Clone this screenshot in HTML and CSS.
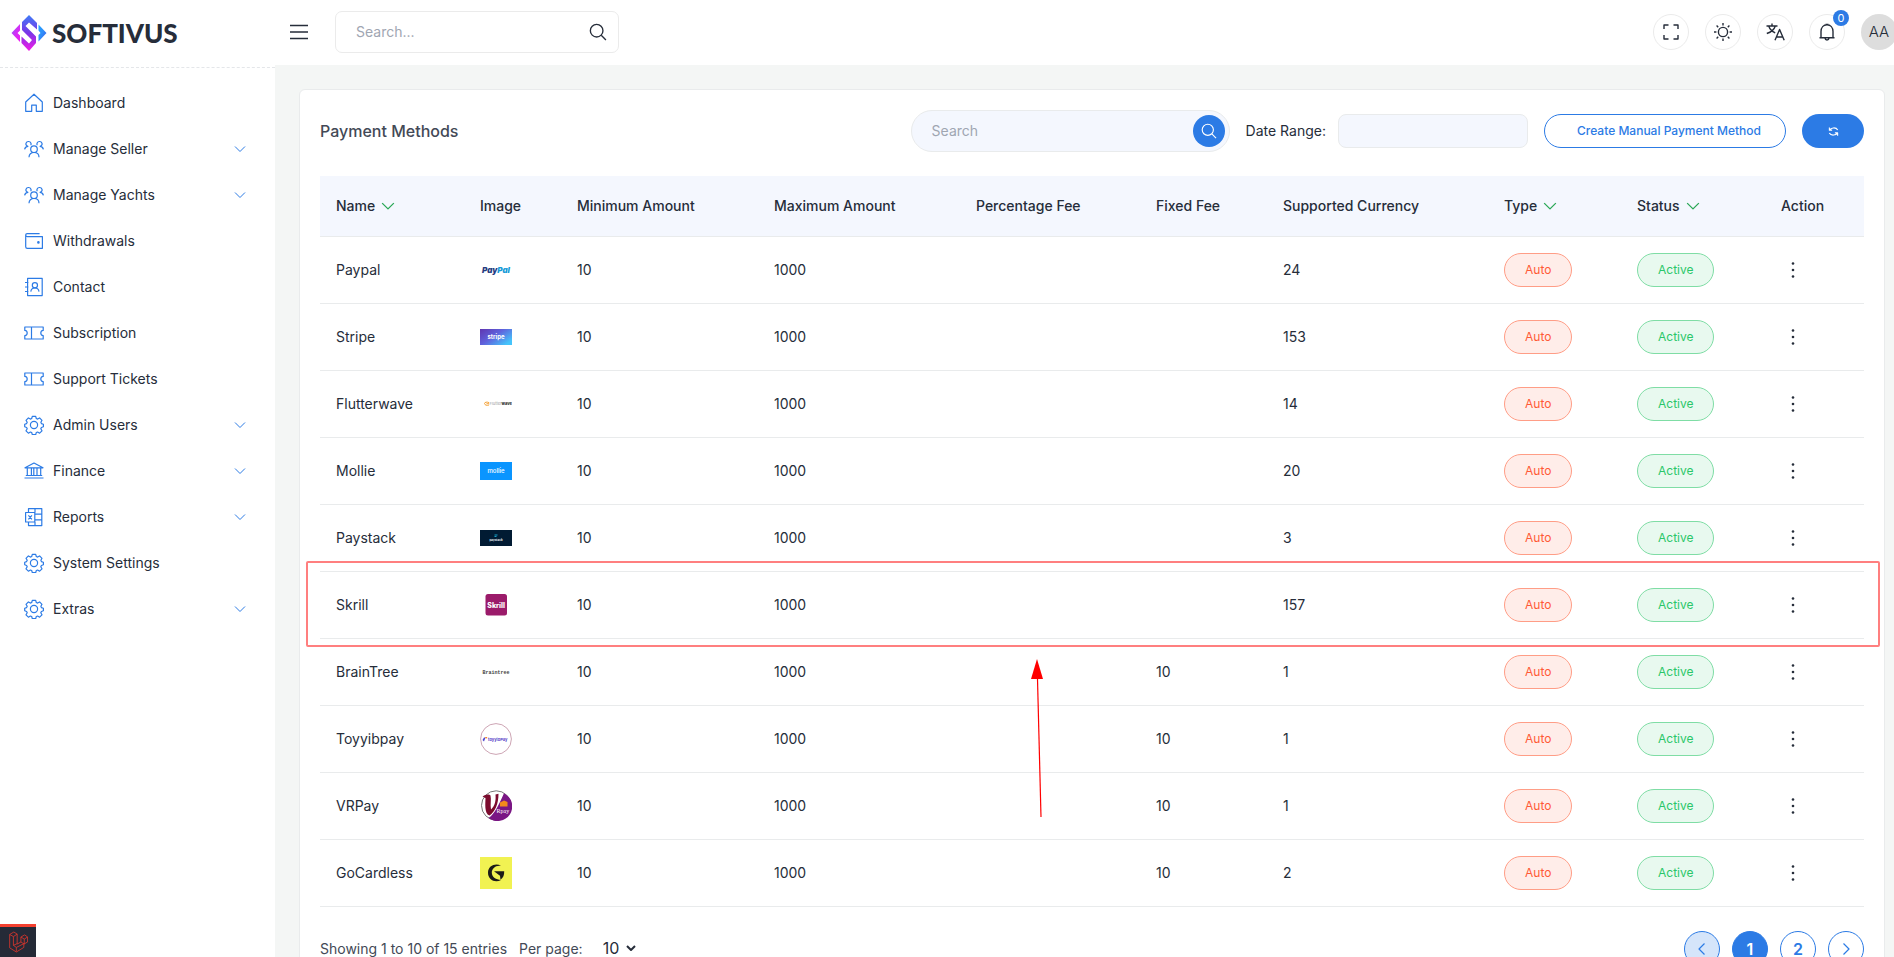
FILE: index.html
```html
<!DOCTYPE html>
<html lang="en">
<head>
<meta charset="utf-8">
<meta name="viewport" content="width=device-width, initial-scale=1">
<title>Payment Methods</title>
<link rel="stylesheet" href="styles.css">
</head>
<body>
<svg class="sprite" aria-hidden="true">
  <symbol id="i-home" viewBox="0 0 20 20"><path d="M10 1.2 1.7 9v9.3h6v-6.2h4.6v6.2h6V9z"/></symbol>
  <symbol id="i-people" viewBox="0 0 20 20"><circle cx="10" cy="10.200" r="3.300"/><path d="M5 18.200c0-2.800 2-4.700 5-4.700s5 1.900 5 4.700M.6 10.400C1 8.400 2.200 7.400 3.900 7.300 2.200 6.800 1.800 5.600 1.900 4.600 2.300 2.200 5.800 1.600 7 4.200v2M19.400 10.400c-.4-2-1.600-3-3.300-3.100 1.700-.5 2.100-1.700 2-2.700C17.700 2.200 14.200 1.600 13 4.200v2"/></symbol>
  <symbol id="i-wallet" viewBox="0 0 20 20"><path d="M15.600 2.600H3.200c-2 0-2 3 0 3h15.200v11.700H3.300c-1 0-1.600-.6-1.600-1.600V4"/><circle class="solid" cx="14.400" cy="11.400" r=".7"/></symbol>
  <symbol id="i-contact" viewBox="0 0 20 20"><path d="M3.600 1.400h14.600v17.200H3.600zM1 5.500h3.400M1 10h3.400M1 14.500h3.400M6.800 14.600c.3-2.400 1.800-3.600 4.100-3.600s3.800 1.200 4.100 3.600"/><circle cx="10.900" cy="8.300" r="2.600"/></symbol>
  <symbol id="i-ticket" viewBox="0 0 20 20"><path d="M.8 4h18.400v3.400c-3.200.3-3.200 4.900 0 5.200V16H.8v-3.400c3.200-.3 3.200-4.900 0-5.200zM7.500 4v12"/></symbol>
  <symbol id="i-gear" viewBox="0 0 20 20"><circle cx="10" cy="10" r="3.600"/><path d="M8.300 1.300h3.400l.6 2.200 1.300.6 2-1.200 2.400 2.400-1.100 2 .5 1.300 2 .6v2.600l-2 .7-.6 1.300 1.200 2-2.400 2.400-2-1.200-1.300.5-.6 2.200H8.300l-.6-2.200-1.300-.5-2 1.200L2 15.800l1.200-2-.6-1.300-1.900-.7V9.200l1.900-.6.600-1.300L2 5.300l2.400-2.400 2 1.200 1.300-.6z"/></symbol>
  <symbol id="i-bank" viewBox="0 0 20 20"><path d="M1 6.800 10 2l9 4.800zM3.300 7v7.500M7.400 7v7.500M9.800 7v7.500M13 7v7.500M16.700 7v7.500M1.800 14.500h16.400M.5 17h19"/></symbol>
  <symbol id="i-report" viewBox="0 0 20 20"><path d="M4.500 5.500V1.600h13.300v17H4.500V15M1.600 5.500h9.200V15H1.600zM4.400 8.300l3.500 4M7.900 8.300l-3.500 4M11 7.200h6.800M11 12.900h6.800M11 1.600v4M11 15v3.500"/></symbol>
  <symbol id="i-down" viewBox="0 0 12 12"><path d="m1 3.500 5 5 5-5"/></symbol>
  <symbol id="i-search" viewBox="0 0 20 20"><circle cx="8.500" cy="8.500" r="7"/><path d="m13.600 13.600 5.200 5.200"/></symbol>
  <symbol id="i-dots" viewBox="0 0 4 18"><circle cx="2" cy="2.500" r="1.300"/><circle cx="2" cy="9" r="1.300"/><circle cx="2" cy="15.500" r="1.300"/></symbol>
</svg>

<div class="app">
  <aside class="sidebar">
    <a class="brand" href="#" aria-label="Softivus">
      <svg class="brand-mark" viewBox="0 0 36 36" aria-hidden="true">
        <defs>
          <linearGradient id="g-blue" x1="0" y1="0" x2="1" y2="1"><stop offset="0" stop-color="#22a5ff"/><stop offset=".5" stop-color="#2f8dfa"/><stop offset="1" stop-color="#3c4fe0"/></linearGradient>
          <linearGradient id="g-pink" x1="0" y1="0" x2="1" y2="1"><stop offset="0" stop-color="#8a5cf8"/><stop offset=".55" stop-color="#d62cf6"/><stop offset="1" stop-color="#f01cf0"/></linearGradient>
          <linearGradient id="g-mid" x1="0" y1="0" x2="0" y2="1"><stop offset="0" stop-color="#3f7cf6"/><stop offset=".5" stop-color="#7a35e8"/><stop offset="1" stop-color="#f31be6"/></linearGradient>
        </defs>
        <path fill="url(#g-mid)" d="m18 0 8 8v6.500l-8-7-3.500 3.500L25 21.500V28l-7 8-7.500-8v-6.500l7.500 7 3-3.500-10-10V7z"/>
        <path fill="url(#g-blue)" d="m27.500 9.500 8 8.500-8 8.500V20l2-2-2-2.500z"/>
        <path fill="url(#g-pink)" d="M9 9v6.500L6.500 18 9 20.500V27L.5 18z"/>
      </svg>
      <span class="brand-name">SOFTIVUS</span>
    </a>
    <nav class="menu" aria-label="Main">
      <a class="menu-item" href="#"><svg class="menu-icon"><use href="#i-home"/></svg><span>Dashboard</span></a>
      <a class="menu-item" href="#"><svg class="menu-icon"><use href="#i-people"/></svg><span>Manage Seller</span><svg class="menu-caret"><use href="#i-down"/></svg></a>
      <a class="menu-item" href="#"><svg class="menu-icon"><use href="#i-people"/></svg><span>Manage Yachts</span><svg class="menu-caret"><use href="#i-down"/></svg></a>
      <a class="menu-item" href="#"><svg class="menu-icon"><use href="#i-wallet"/></svg><span>Withdrawals</span></a>
      <a class="menu-item" href="#"><svg class="menu-icon"><use href="#i-contact"/></svg><span>Contact</span></a>
      <a class="menu-item" href="#"><svg class="menu-icon"><use href="#i-ticket"/></svg><span>Subscription</span></a>
      <a class="menu-item" href="#"><svg class="menu-icon"><use href="#i-ticket"/></svg><span>Support Tickets</span></a>
      <a class="menu-item" href="#"><svg class="menu-icon"><use href="#i-gear"/></svg><span>Admin Users</span><svg class="menu-caret"><use href="#i-down"/></svg></a>
      <a class="menu-item" href="#"><svg class="menu-icon"><use href="#i-bank"/></svg><span>Finance</span><svg class="menu-caret"><use href="#i-down"/></svg></a>
      <a class="menu-item" href="#"><svg class="menu-icon"><use href="#i-report"/></svg><span>Reports</span><svg class="menu-caret"><use href="#i-down"/></svg></a>
      <a class="menu-item" href="#"><svg class="menu-icon"><use href="#i-gear"/></svg><span>System Settings</span></a>
      <a class="menu-item" href="#"><svg class="menu-icon"><use href="#i-gear"/></svg><span>Extras</span><svg class="menu-caret"><use href="#i-down"/></svg></a>
    </nav>
  </aside>

  <div class="page">
    <header class="topbar">
      <button class="burger" type="button" aria-label="Toggle menu"><svg viewBox="0 0 20 16"><path d="M1 1.500h18M1 8h18M1 14.500h18"/></svg></button>
      <form class="top-search">
        <input type="search" placeholder="Search..." aria-label="Search site">
        <button type="button" aria-label="Search"><svg><use href="#i-search"/></svg></button>
      </form>
      <div class="top-actions">
        <button class="round" type="button" aria-label="Full screen"><svg viewBox="0 0 20 20"><path d="M3 7V3h4.500M12.500 3H17v4M17 13v4h-4.500M7.500 17H3v-4"/></svg></button>
        <button class="round" type="button" aria-label="Theme"><svg viewBox="0 0 20 20"><circle cx="10" cy="10" r="4.600"/><path d="M10 1v2.400M10 16.600V19M1 10h2.400M16.600 10H19M3.600 3.600l1.600 1.600M14.800 14.800l1.600 1.600M3.600 16.400l1.600-1.600M14.800 5.200l1.600-1.600"/></svg></button>
        <button class="round" type="button" aria-label="Language"><svg viewBox="0 0 20 20"><path d="M1.500 4h11M7 1.600V4M3.800 4.200c1 3 3.700 5.400 6.400 6.600M10.200 4.200c-1 3.200-4.200 5.900-8.400 7.300M10 18.200l4.600-10.700 4.600 10.700M11.600 15h6"/></svg></button>
        <button class="round" type="button" aria-label="Notifications"><svg viewBox="0 0 20 20"><path d="M2.500 15.800h15M4 15.800V9.500c0-4 2.500-6.700 6-6.700s6 2.700 6 6.700v6.300M8.500 2.500h3M8 16.200c.3 2.400 3.700 2.400 4 0"/></svg><span class="count">0</span></button>
        <button class="avatar" type="button">AA</button>
      </div>
    </header>

    <main class="content">
      <section class="card">
        <div class="toolbar">
          <h1 class="title">Payment Methods</h1>
          <form class="pill-search">
            <input type="search" placeholder="Search" aria-label="Search payment methods">
            <button type="button" aria-label="Search"><svg><use href="#i-search"/></svg></button>
          </form>
          <div class="range"><label for="range">Date Range:</label><input id="range" type="text"></div>
          <div class="tool-buttons">
            <button class="btn btn-line" type="button">Create Manual Payment Method</button>
            <button class="btn btn-fill" type="button" aria-label="Refresh"><svg viewBox="0 0 12 12"><path d="M1.500 1.500v3h3M1.800 4.400C3 1.900 8.600.8 10.600 4.400M10.500 10.500v-3h-3M10.200 7.600C9 10.100 3.400 11.200 1.400 7.600"/></svg></button>
          </div>
        </div>

        <table class="grid">
          <colgroup><col class="c-name"><col class="c-image"><col class="c-min"><col class="c-max"><col class="c-pct"><col class="c-fixed"><col class="c-cur"><col class="c-type"><col class="c-status"><col class="c-action"></colgroup>
          <thead>
            <tr>
              <th><span class="sort">Name<svg><use href="#i-down"/></svg></span></th><th>Image</th><th>Minimum Amount</th><th>Maximum Amount</th><th>Percentage Fee</th><th>Fixed Fee</th><th>Supported Currency</th>
              <th><span class="sort">Type<svg><use href="#i-down"/></svg></span></th><th><span class="sort">Status<svg><use href="#i-down"/></svg></span></th><th>Action</th>
            </tr>
          </thead>
          <tbody>
            <tr><td>Paypal</td><td><svg class="thumb" viewBox="0 0 32 32"><text class="t-paypal" x="2" y="18.500"><tspan fill="#253b80">Pay</tspan><tspan fill="#179bd7">Pal</tspan></text></svg></td><td>10</td><td>1000</td><td></td><td></td><td>24</td><td><span class="tag auto">Auto</span></td><td><span class="tag active">Active</span></td><td><button class="more" type="button" aria-label="Paypal actions"><svg><use href="#i-dots"/></svg></button></td></tr>
            <tr><td>Stripe</td><td><svg class="thumb" viewBox="0 0 32 32"><defs><linearGradient id="g-stripe" x1="0" y1="0" x2="1" y2=".7"><stop offset="0" stop-color="#5f35b0"/><stop offset=".5" stop-color="#5f62dc"/><stop offset="1" stop-color="#45c4fb"/></linearGradient></defs><path fill="url(#g-stripe)" d="M0 8h32v16H0z"/><text class="t-stripe" x="16" y="18" text-anchor="middle">stripe</text></svg></td><td>10</td><td>1000</td><td></td><td></td><td>153</td><td><span class="tag auto">Auto</span></td><td><span class="tag active">Active</span></td><td><button class="more" type="button" aria-label="Stripe actions"><svg><use href="#i-dots"/></svg></button></td></tr>
            <tr><td>Flutterwave</td><td><svg class="thumb" viewBox="0 0 32 32"><path fill="none" stroke="#f5a43c" d="M9 14.600c-2-1-4.500-.4-4.500.9 0 1.400 2.500 2.500 4.500 1.500M6.500 15.700h2.500"/><text class="t-flutter" x="9.500" y="17.300"><tspan fill="#999">Flutter</tspan><tspan class="bold" fill="#333">wave</tspan></text></svg></td><td>10</td><td>1000</td><td></td><td></td><td>14</td><td><span class="tag auto">Auto</span></td><td><span class="tag active">Active</span></td><td><button class="more" type="button" aria-label="Flutterwave actions"><svg><use href="#i-dots"/></svg></button></td></tr>
            <tr><td>Mollie</td><td><svg class="thumb" viewBox="0 0 32 32"><path fill="#0a95ff" d="M0 7h32v18H0z"/><text class="t-mollie" x="16" y="18" text-anchor="middle">mollie</text></svg></td><td>10</td><td>1000</td><td></td><td></td><td>20</td><td><span class="tag auto">Auto</span></td><td><span class="tag active">Active</span></td><td><button class="more" type="button" aria-label="Mollie actions"><svg><use href="#i-dots"/></svg></button></td></tr>
            <tr><td>Paystack</td><td><svg class="thumb" viewBox="0 0 32 32"><path fill="#011b33" d="M0 8h32v16H0z"/><path fill="#1a9fc6" d="M14.500 12.500h3v1h-3zm0 1.500h2v1h-2z"/><text class="t-paystack" x="16" y="18.600" text-anchor="middle">paystack</text></svg></td><td>10</td><td>1000</td><td></td><td></td><td>3</td><td><span class="tag auto">Auto</span></td><td><span class="tag active">Active</span></td><td><button class="more" type="button" aria-label="Paystack actions"><svg><use href="#i-dots"/></svg></button></td></tr>
            <tr><td>Skrill</td><td><svg class="thumb" viewBox="0 0 32 32"><rect fill="#9b1b6a" x="5.500" y="5" width="21.500" height="21.500" rx="2.500"/><text class="t-skrill" x="16.200" y="18.500" text-anchor="middle">Skrill</text></svg></td><td>10</td><td>1000</td><td></td><td></td><td>157</td><td><span class="tag auto">Auto</span></td><td><span class="tag active">Active</span></td><td><button class="more" type="button" aria-label="Skrill actions"><svg><use href="#i-dots"/></svg></button></td></tr>
            <tr><td>BrainTree</td><td><svg class="thumb" viewBox="0 0 32 32"><text class="t-brain" x="16" y="18" text-anchor="middle">Braintree</text></svg></td><td>10</td><td>1000</td><td></td><td>10</td><td>1</td><td><span class="tag auto">Auto</span></td><td><span class="tag active">Active</span></td><td><button class="more" type="button" aria-label="BrainTree actions"><svg><use href="#i-dots"/></svg></button></td></tr>
            <tr><td>Toyyibpay</td><td><svg class="thumb" viewBox="0 0 32 32"><circle cx="16" cy="16" r="15.400" fill="#fff" stroke="#c79bab" stroke-width=".9"/><path fill="#4a45cf" d="m2.500 17 1.500-2.500h1.500L4 18.500z"/><path fill="#f58220" d="M5 14h2.500L6 16z"/><text class="t-toyyib" x="8" y="17.500">toyyibPay</text></svg></td><td>10</td><td>1000</td><td></td><td>10</td><td>1</td><td><span class="tag auto">Auto</span></td><td><span class="tag active">Active</span></td><td><button class="more" type="button" aria-label="Toyyibpay actions"><svg><use href="#i-dots"/></svg></button></td></tr>
            <tr><td>VRPay</td><td><svg class="thumb" viewBox="0 0 32 32"><circle cx="16.200" cy="15.500" r="14.700" fill="#fff" stroke="#777"/><path fill="#7a1684" d="M24 3.200a14.700 14.700 0 1 1-15.500 24.800C15 24 19.500 13 24 3.200z"/><path fill="#7b0b2e" d="M2.500 6.500C5 4.500 9 3.500 10.500 5.500c1 4-.5 9 .5 14 4-3.500 5-9 4.500-15l3-.8C18.500 14 15 22 9.500 25.500 4 24 5.500 12 5.500 8z"/><path fill="#f28a1c" d="m20 12.500 4-2 3.500 1.500v4.500H20z"/><text class="t-vr" x="16.500" y="22.500">Rpay</text></svg></td><td>10</td><td>1000</td><td></td><td>10</td><td>1</td><td><span class="tag auto">Auto</span></td><td><span class="tag active">Active</span></td><td><button class="more" type="button" aria-label="VRPay actions"><svg><use href="#i-dots"/></svg></button></td></tr>
            <tr><td>GoCardless</td><td><svg class="thumb" viewBox="0 0 32 32"><path fill="#f1f252" d="M0 0h32v32H0z"/><path fill="#1c1b18" d="M21 8.800C16 5.800 8 8.300 8 15.800c0 7.400 7.500 10.400 13 7.200-5-.2-9-2.800-9.200-7.200-.2-4.200 4-8 9.200-7zM14 14.300h10.200c0 4-.8 6.200-3.700 8.400l-.5-4z"/></svg></td><td>10</td><td>1000</td><td></td><td>10</td><td>2</td><td><span class="tag auto">Auto</span></td><td><span class="tag active">Active</span></td><td><button class="more" type="button" aria-label="GoCardless actions"><svg><use href="#i-dots"/></svg></button></td></tr>
          </tbody>
        </table>

        <div class="table-foot">
          <span>Showing 1 to 10 of 15 entries</span>
          <label for="per-page">Per page:</label>
          <span class="select-wrap"><select id="per-page"><option>10</option><option>20</option><option>50</option></select><svg viewBox="0 0 12 12"><path d="m2 4 4 4 4-4"/></svg></span>
          <nav class="pager" aria-label="Pages">
            <button class="prev" type="button" aria-label="Previous"><svg viewBox="0 0 14 14"><path d="M9.500 1.500 4 7l5.500 5.500"/></svg></button>
            <button class="current" type="button">1</button>
            <button type="button">2</button>
            <button type="button" aria-label="Next"><svg viewBox="0 0 14 14"><path d="M4.500 1.500 10 7l-5.500 5.500"/></svg></button>
          </nav>
        </div>
      </section>
    </main>
  </div>

  <svg class="callout" viewBox="0 0 1894 957" aria-hidden="true">
    <rect x="307" y="562" width="1572" height="84" rx="1" fill="none" stroke="#ff0000" stroke-opacity=".5" stroke-width="2"/>
    <path d="m1037.500 679 3.500 138" stroke="#ff0000" stroke-width="1.200" fill="none"/>
    <path d="m1037 659 6 20h-12z" fill="#ff0000"/>
  </svg>

  <button class="debug" type="button" aria-label="Debug bar"><svg viewBox="0 0 24 28"><path d="m2 5 5-3 4 2.500v12l4.500-2.500V8l4.500-2.500L23.500 8v6L19 16.500v4L10 26l-8-5zM2 5l4.500 2.500V18l4.500-2M6.500 7.500l4.500-3M15.500 8l4 2.500 4-2.500M19.500 10.500v6l-4-2.500M6.500 18l3.500 2.500v5M10 20.500l9-4.500"/></svg></button>
</div>
</body>
</html>
```
FILE: styles.css
```css
* { box-sizing: border-box; }

body {
  margin: 0;
  background: #f4f6f5;
  color: #262d3a;
  font: 14px/20px Inter, "Liberation Sans", sans-serif;
}

button, input, select { font: inherit; color: inherit; margin: 0; }
button { cursor: pointer; padding: 0; border: 0; background: none; }
a { color: inherit; text-decoration: none; }
svg { display: block; fill: none; stroke-linejoin: round; }
.sprite { position: absolute; width: 0; height: 0; }
input[type="search"] { appearance: none; outline: 0; }
input::placeholder { color: #9fa6b2; opacity: 1; }

.app {
  position: relative;
  display: grid;
  grid-template-columns: 275px minmax(0, 1fr);
  height: 100vh;
  overflow: hidden;
}

/* Sidebar */
.sidebar { background: #fff; }
.brand {
  display: flex;
  align-items: center;
  gap: 5px;
  height: 68px;
  padding: 0 11px 2px;
  border-bottom: 1px dashed #e4e6e9;
}
.brand-mark { width: 36px; height: 36px; }
.brand-name { font: 900 26px/36px Lato, sans-serif; color: #262d3a; }
.menu { display: grid; padding: 12px 0; }
.menu-item {
  display: flex;
  align-items: center;
  gap: 9px;
  height: 46px;
  padding: 0 29px 0 24px;
}
.menu-icon { width: 20px; height: 20px; stroke: #2c7be5; stroke-width: 1.2; }
.menu-icon .solid { fill: #2c7be5; }
.menu-caret { width: 12px; height: 12px; margin-left: auto; stroke: #2c7be5; }

/* Top bar */
.page { min-width: 0; }
.topbar {
  display: flex;
  align-items: center;
  height: 65px;
  padding: 0 0 2px 14px;
  background: #fff;
}
.burger { width: 20px; margin-right: 26px; }
.burger svg { width: 20px; height: 16px; stroke: #262d3a; stroke-width: 1.5; }
.top-search {
  display: flex;
  align-items: center;
  width: 284px;
  height: 42px;
  padding: 0 11px 0 20px;
  border: 1px solid #ebebeb;
  border-radius: 7px;
}
.top-search input { flex: 1; min-width: 0; padding: 0; border: 0; background: none; }
.top-search svg { width: 18px; height: 18px; stroke: #262d3a; stroke-width: 1.5; }
.top-actions { display: flex; gap: 16px; margin: 0 -3px 0 auto; }
.round {
  position: relative;
  display: grid;
  place-items: center;
  width: 36px;
  height: 36px;
  border: 1px solid #ebebeb;
  border-radius: 50%;
}
.round svg { width: 20px; height: 20px; stroke: #262d3a; stroke-width: 1.4; }
.count {
  position: absolute;
  top: -5px;
  right: -5px;
  width: 16px;
  height: 16px;
  border-radius: 50%;
  background: #2c7be5;
  color: #fff;
  font-size: 11px;
  line-height: 16px;
}
.avatar {
  width: 36px;
  height: 36px;
  border-radius: 50%;
  background: #ddd;
  font-size: 15px;
  font-weight: 300;
}

/* Card */
.content { padding: 24px 9px 24px 24px; }
.card {
  padding: 20px;
  background: #fff;
  border: 1px solid #e9ebec;
  border-radius: 6px;
}
.toolbar { display: flex; align-items: center; gap: 16px; margin-bottom: 24px; }
.title { margin: 0 auto 0 0; color: #434956; font-size: 16px; font-weight: 500; line-height: 24px; }
.pill-search {
  display: flex;
  align-items: center;
  width: 319px;
  height: 42px;
  padding: 0 4px 0 20px;
  border: 1px solid #e9ebec;
  border-radius: 21px;
  background: #f4f7fe;
}
.pill-search input { flex: 1; min-width: 0; padding: 0; border: 0; background: none; }
.pill-search button {
  display: grid;
  place-items: center;
  width: 32px;
  height: 32px;
  border-radius: 50%;
  background: #2c7be5;
}
.pill-search svg { width: 16px; height: 16px; stroke: #fff; stroke-width: 1.4; }
.range { display: flex; align-items: center; gap: 12px; }
.range input {
  width: 190px;
  height: 34px;
  padding: 0 12px;
  border: 1px solid #e9ebec;
  border-radius: 8px;
  background: #f4f7fe;
}
.tool-buttons { display: flex; gap: 16px; }
.btn { height: 34px; border-radius: 17px; font-size: 12px; font-weight: 500; }
.btn-line { padding: 0 24px 0 32px; border: 1px solid #2c7be5; color: #2c7be5; background: #fff; }
.btn-fill { display: grid; place-items: center; width: 62px; background: #2c7be5; }
.btn-fill svg { width: 11px; height: 11px; stroke: #fff; stroke-width: 1.2; }

/* Table */
.grid { width: 100%; table-layout: fixed; border-collapse: collapse; }
.c-name { width: 144px; }
.c-image { width: 97px; }
.c-min { width: 197px; }
.c-max { width: 202px; }
.c-pct { width: 180px; }
.c-fixed { width: 127px; }
.c-cur { width: 221px; }
.c-type { width: 133px; }
.c-status { width: 144px; }
.c-action { width: 99px; }
.grid th {
  height: 60px;
  padding: 0 16px;
  background: #f4f7fe;
  font-weight: 500;
  text-align: left;
  white-space: nowrap;
}
.grid tr { border-bottom: 1px solid #e9ebec; }
.grid td { height: 67px; padding: 16px; line-height: 20px; }
.sort { display: flex; align-items: center; gap: 6px; }
.sort svg { width: 14px; height: 14px; stroke: #28a755; stroke-width: 1.1; }
.tag {
  display: inline-block;
  height: 34px;
  padding: 0 20px;
  border: 1px solid;
  border-radius: 17px;
  font-size: 12px;
  line-height: 32px;
  vertical-align: middle;
}
.auto { color: #ff5a36; background: #ffede9; border-color: #ff9d86; }
.active { color: #2ac769; background: #e8f9ef; border-color: #7fdda5; }
.more { display: block; padding: 4px 10px; }
.more svg { width: 4px; height: 18px; fill: #262d3a; }

/* Provider logos */
.thumb { width: 32px; height: 32px; font-family: Inter, sans-serif; }
.t-paypal { font: italic 900 8px Inter, sans-serif; }
.t-stripe { font-size: 6px; font-weight: 700; fill: #fff; }
.t-flutter { font-size: 4px; }
.bold { font-weight: 800; }
.t-mollie { font-size: 6px; font-weight: 500; fill: #fff; }
.t-paystack { font-size: 3px; font-weight: 600; fill: #fff; }
.t-skrill { font-size: 7px; font-weight: 800; fill: #fff; }
.t-brain { font: 700 5px "Liberation Mono", monospace; fill: #444; }
.t-toyyib { font-size: 4px; font-weight: 700; fill: #5a45c8; }
.t-vr { font: 6px "Liberation Serif", serif; fill: #fff; }

/* Table footer */
.table-foot { display: flex; align-items: center; gap: 12px; margin-top: 24px; color: #434956; }
.select-wrap { position: relative; }
.select-wrap select {
  appearance: none;
  width: 44px;
  padding: 0 0 0 8px;
  border: 0;
  background: none;
  color: #262d3a;
  font-size: 16px;
}
.select-wrap svg {
  position: absolute;
  top: 4px;
  right: 2px;
  width: 12px;
  height: 12px;
  stroke: #262d3a;
  stroke-width: 2;
  pointer-events: none;
}
.pager { display: flex; gap: 12px; margin-left: auto; }
.pager button {
  display: grid;
  place-items: center;
  width: 36px;
  height: 36px;
  border: 1px solid #2c7be5;
  border-radius: 50%;
  color: #2c7be5;
  font-size: 16px;
  font-weight: 600;
}
.pager svg { width: 14px; height: 14px; stroke: #2c7be5; stroke-width: 1.2; }
.pager .prev { background: #d5e5fa; }
.pager .current { background: #2c7be5; color: #fff; }

/* Overlays */
.callout { position: absolute; top: 0; left: 0; width: 100%; pointer-events: none; }
.debug {
  position: absolute;
  left: 0;
  bottom: 0;
  display: grid;
  place-items: center;
  width: 36px;
  height: 33px;
  border-top: 3px solid #f4402f;
  background: #252a37;
}
.debug svg { width: 20px; height: 26px; stroke: #d8362c; stroke-width: 1; }
```
